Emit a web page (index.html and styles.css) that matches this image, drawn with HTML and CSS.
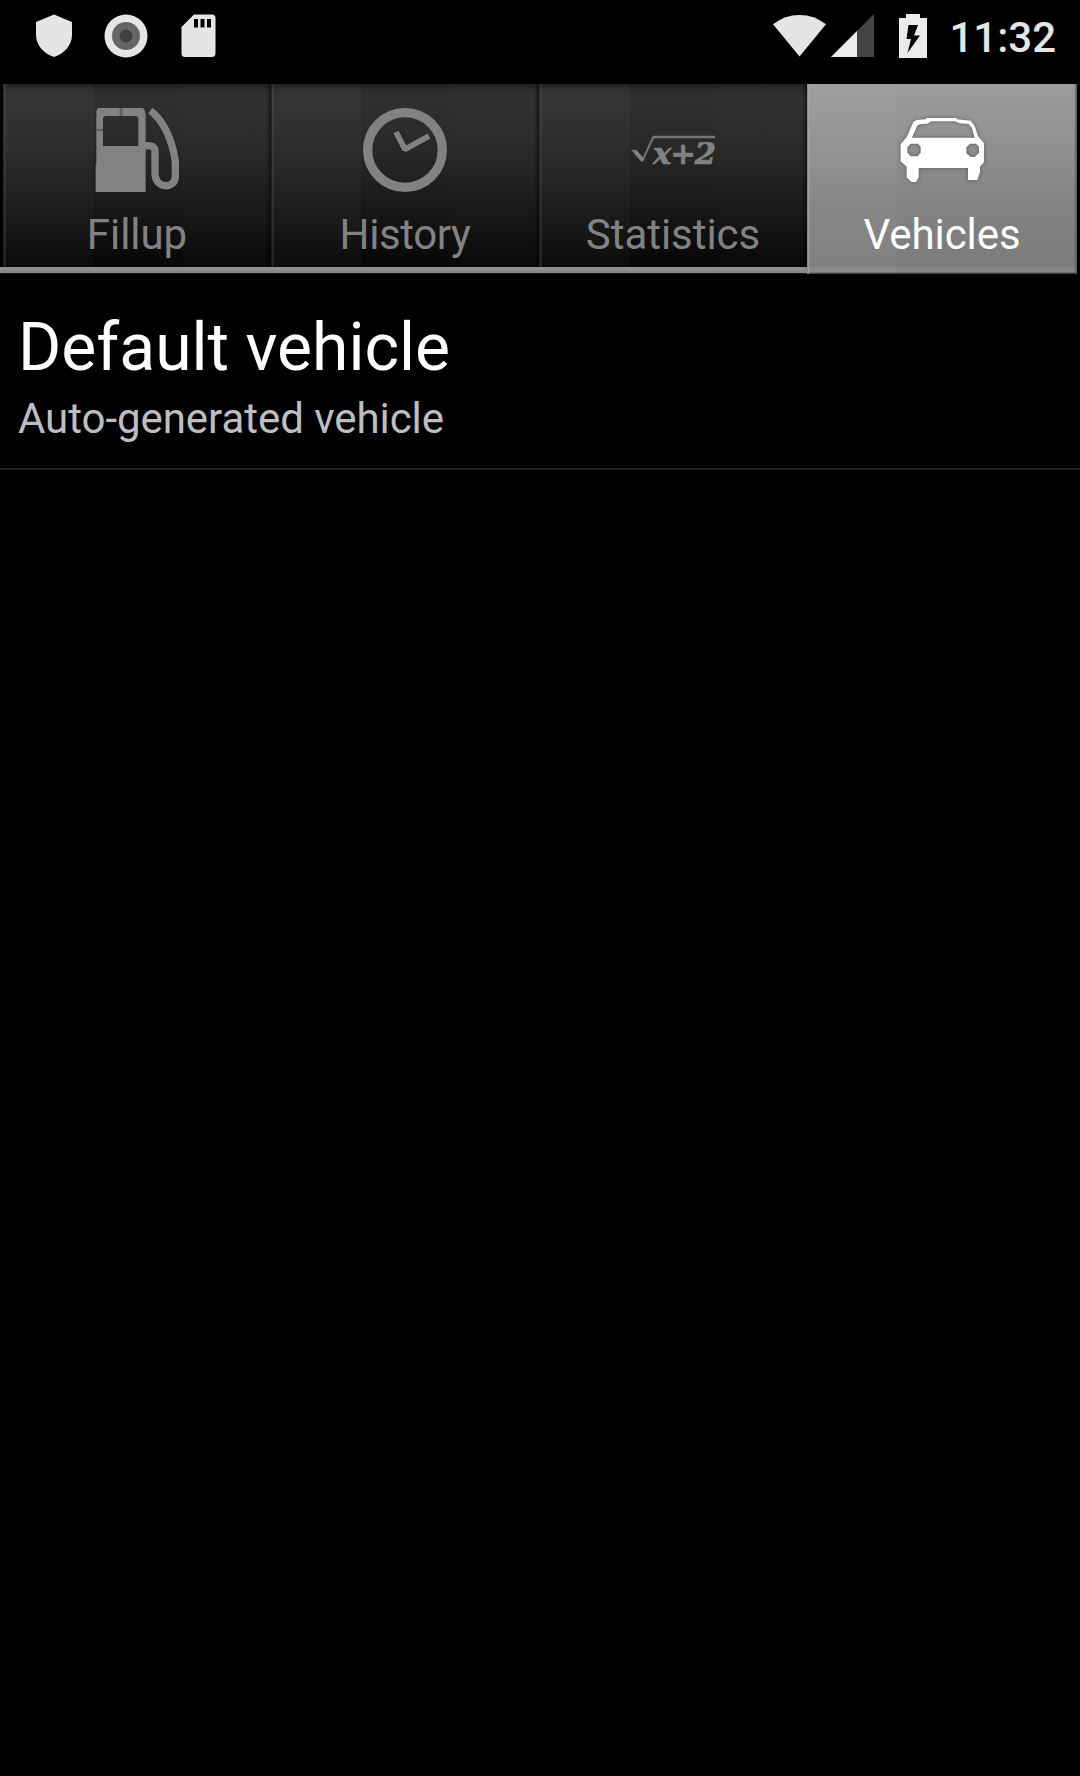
FILE: index.html
```html
<!DOCTYPE html>
<html lang="en">
<head>
<meta charset="utf-8">
<title>Vehicles</title>
<link rel="stylesheet" href="styles.css">
</head>
<body>
<header class="status">
  <div class="status-left">
    <svg width="36" height="43" viewBox="0 0 36 43"><path fill="#e5e5e5" d="M18 .5 36 8V21C36 31 28 40 18 43 8 40 0 31 0 21V8Z"/></svg>
    <svg width="44" height="44" viewBox="0 0 44 44"><circle cx="22" cy="22" r="21.500" fill="#e5e5e5"/><circle cx="22" cy="22" r="14" fill="#666"/><circle cx="22" cy="22" r="6.500" fill="#404040"/></svg>
    <svg width="35" height="43" viewBox="0 0 35 43"><path fill="#e5e5e5" fill-rule="evenodd" d="M13 .5H31Q34.500 .5 34.500 4V39Q34.500 43 31 43H4Q.5 43 .5 39V13ZM13 5V13.500H17V5ZM19.500 5V13.500H23.500V5ZM26 5V13.500H30V5Z"/></svg>
  </div>
  <div class="status-right">
    <svg class="wifi" width="53" height="43" viewBox="0 0 54 43"><path fill="#e5e5e5" d="M0 10Q12 .5 27 .5T54 10L27 43Z"/></svg>
    <svg class="signal" width="43" height="43" viewBox="0 0 43 43"><path fill="#444" d="M43 0V43H0Z"/><path fill="#ebebeb" d="M26 17V43H0Z"/></svg>
    <svg class="battery" width="28" height="44" viewBox="0 0 28 44"><path fill="#ebebeb" d="M7 0H21V4H28V44H0V4H7Z"/><path fill="#000" d="M9.500 11H19L15 21.500H21L8.500 39L12 25H7.500Z"/></svg>
    <span class="clock">11:32</span>
  </div>
</header>
<nav class="tabs">
  <div class="tab">
    <svg class="icon" viewBox="0 0 252 252"><path fill="#828282" fill-rule="evenodd" d="M4 168V8L10 0H142Q150 2 152 20V252H2V168ZM30 24 24 30V114H130V30L124 24Z"/><path fill="none" stroke="#828282" stroke-width="22" stroke-linejoin="round" d="M166 8C196 30 216 66 230 110 238 138 241 150 241 165V207C239 243 184 243 180 200V132C180 113 168 113 150 113"/><path stroke="#606060" stroke-width="8" d="M78 0V24M4 66H24"/></svg>
    <span>Fillup</span>
  </div>
  <div class="tab">
    <svg class="icon" viewBox="0 0 252 252"><circle cx="126" cy="126" r="112" fill="none" stroke="#828282" stroke-width="28"/><path fill="none" stroke="#828282" stroke-width="17" stroke-linejoin="bevel" d="M99 72 126 124 198 84"/></svg>
    <span class="tight">History</span>
  </div>
  <div class="tab">
    <svg class="icon" viewBox="0 0 252 252"><path fill="none" stroke="#777" stroke-width="6" d="M2 128H12L34 158 67 87"/><path stroke="#828282" stroke-width="12" d="M12 130 34 156"/><path stroke="#777" stroke-width="7" d="M66 87H252"/><text class="formula" y="168"><tspan x="66">x</tspan><tspan x="118">+</tspan><tspan x="191">2</tspan></text></svg>
    <span>Statistics</span>
  </div>
  <div class="tab selected">
    <svg class="icon car" viewBox="0 0 252 252"><path fill="#fff" fill-rule="evenodd" d="M78 34V30H170V34L212 38 224 54 234 84 252 106V162L240 176V192L232 216H204V180H56V208L48 222H34L20 208V176L2 160V108L20 88 40 42 50 36ZM64 48 52 52 36 89H224L216 60 206 48 178 46 166 40H94L82 47ZM32 107 22 118V134L32 145H53L62 134V116L54 107ZM210 107 199 118V136L212 147H224L237 134V116L228 107Z"/></svg>
    <span>Vehicles</span>
  </div>
</nav>
<main>
  <div class="row">
    <div class="title">Default vehicle</div>
    <div class="subtitle">Auto-generated vehicle</div>
  </div>
</main>
</body>
</html>
```
FILE: styles.css
```css
body {
  margin: 0;
  min-height: 1776px;
  background: #000;
  color: #fff;
  font-family: Roboto, sans-serif;
}
svg { display: block; flex: none; }
.status {
  display: flex;
  justify-content: space-between;
  box-sizing: border-box;
  height: 84px;
  padding: 14px 24px 0 36px;
}
.status-left { display: flex; gap: 32px; }
.status-left svg:last-child { margin-left: 1px; }
.status-right { display: flex; }
.signal { margin-left: 5px; }
.battery { margin-left: 25px; }
.clock {
  margin: -1px 0 0 22px;
  color: #e5e5e5;
  font-size: 42px;
  font-weight: 500;
  line-height: 49px;
}
.tabs {
  display: grid;
  grid-template-columns: repeat(3, 268px) 270px;
  box-sizing: border-box;
  height: 190px;
  padding: 0 3px;
  background: linear-gradient(#000, #000) right / 3px 100% no-repeat,
    linear-gradient(#949494, #858585) 0 183px / 100% 6px no-repeat,
    linear-gradient(#333, #000) 0 189px / 100% 1px no-repeat;
}
.tab {
  display: flex;
  flex-direction: column;
  align-items: center;
  box-sizing: border-box;
  height: 183px;
  padding-top: 24px;
  color: #828282;
  font-size: 42px;
  letter-spacing: -0.05px;
  line-height: 49px;
  background:
    linear-gradient(90deg, #000000b0, #55555566 1px, #55555566 2px, transparent 3px, transparent 263px, #0008),
    linear-gradient(90deg, #ffffff06 90px, transparent 90px, transparent 178px, #ffffff02 178px),
    linear-gradient(#1c1c1c, #2d2d2d 7px, #303030 18px, #272727 70px, #191919 120px, #060606);
}
.tight { letter-spacing: -0.4px; }
.icon { width: 84px; height: 84px; margin-bottom: 18px; }
.formula {
  fill: #828282;
  stroke: #828282;
  stroke-width: 2px;
  font: italic bold 92px "DejaVu Serif", serif;
}
.tab.selected {
  height: 190px;
  color: #fff;
  background:
    linear-gradient(90deg, #666, #aaa 1px, #aaa5 2px, transparent 3px, transparent 267px, #555),
    linear-gradient(90deg, #ffffff08 90px, transparent 90px),
    linear-gradient(#9c9c9c, #8e8e8e 75px, #828282 125px, #7c7c7c 181px, #888 185px, #858585 188px, #222 190px);
}
.car { filter: drop-shadow(0 0 2px #0005); }
.row {
  height: 159px;
  padding: 35px 18px 0;
  border-bottom: 2px solid #222;
}
.title { font-size: 66px; line-height: 77px; }
.subtitle {
  margin-top: 8px;
  color: #bebebe;
  font-size: 42px;
  letter-spacing: -0.05px;
  line-height: 49px;
}
```
